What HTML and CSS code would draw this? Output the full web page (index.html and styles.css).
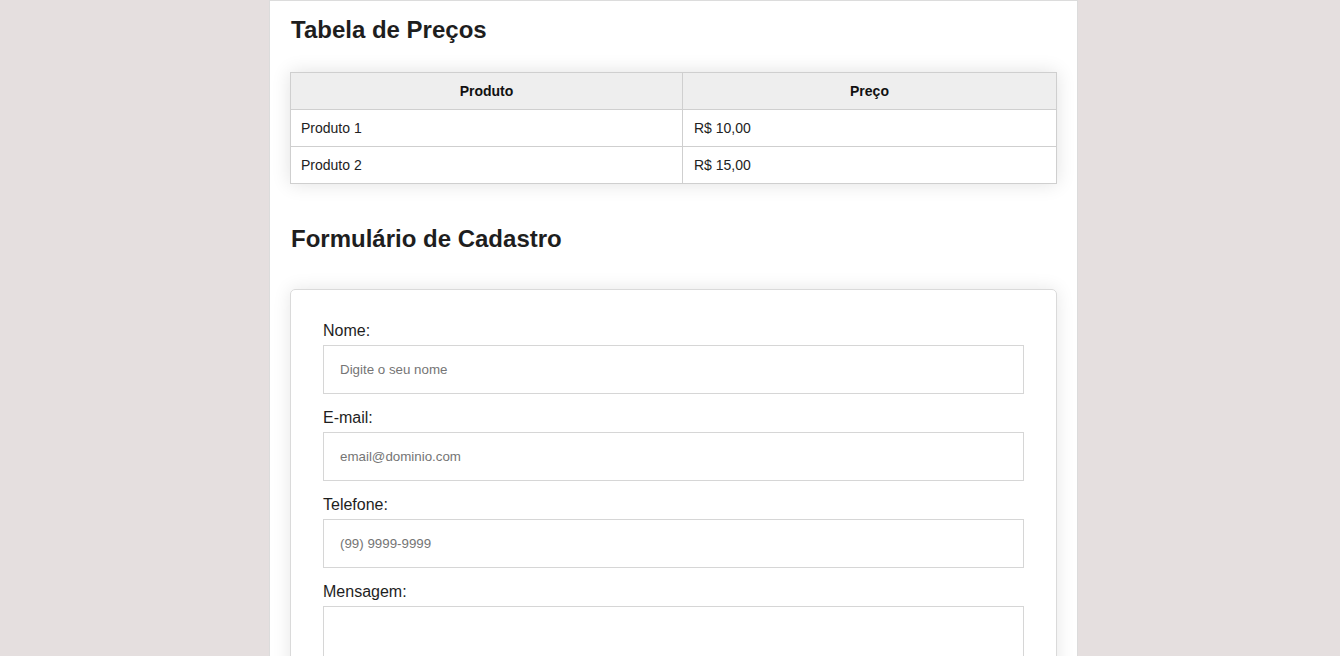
FILE: index.html
```html
<!DOCTYPE html>
<html lang="pt-BR">
<head>
<meta charset="utf-8">
<title>Tabela de Preços</title>
<link rel="stylesheet" href="styles.css">
</head>
<body>
<main class="container">
  <h2 class="title">Tabela de Preços</h2>
  <table class="price-table">
    <thead>
      <tr><th class="col-product">Produto</th><th>Preço</th></tr>
    </thead>
    <tbody>
      <tr><td>Produto 1</td><td>R$ 10,00</td></tr>
      <tr><td>Produto 2</td><td>R$ 15,00</td></tr>
    </tbody>
  </table>
  <h2 class="title title-form">Formulário de Cadastro</h2>
  <form class="card">
    <label class="label" for="nome">Nome:</label>
    <input class="field" id="nome" type="text" placeholder="Digite o seu nome">
    <label class="label" for="email">E-mail:</label>
    <input class="field" id="email" type="email" placeholder="email@dominio.com">
    <label class="label" for="tel">Telefone:</label>
    <input class="field" id="tel" type="tel" placeholder="(99) 9999-9999">
    <label class="label" for="msg">Mensagem:</label>
    <textarea class="field area" id="msg"></textarea>
  </form>
</main>
</body>
</html>
```
FILE: styles.css
```css
html, body {
  margin: 0;
  height: 100%;
}
body {
  padding-left: 7px;
  background: #e5dfdf;
  font-family: "Liberation Sans", Arial, sans-serif;
  color: #222;
  overflow: hidden;
}
.container {
  width: 767px;
  margin: 0 auto;
  padding: 15px 20px 40px;
  background: #fff;
  border: 1px solid #dcdcdc;
  min-height: 100%;
}
.title {
  margin: 0 0 28px 1px;
  font-size: 24px;
  line-height: 28px;
  font-weight: bold;
  color: #1e1e1e;
}
.title-form {
  margin: 41px 0 36px 1px;
}
.price-table {
  width: 100%;
  border-collapse: collapse;
  box-shadow: 0 0 18px rgba(0, 0, 0, 0.12);
  font-size: 14px;
  line-height: 16px;
}
.price-table th,
.price-table td {
  border: 1px solid #cfcfcf;
  padding: 10px;
  text-align: left;
}
.price-table td:last-child {
  padding-left: 11px;
}
.price-table th {
  background: #eee;
  text-align: center;
  font-weight: bold;
  color: #111;
}
.col-product {
  width: 371px;
}
.card {
  display: flex;
  flex-direction: column;
  padding: 32px 32px 40px;
  border: 1px solid #dadada;
  border-radius: 5px;
  box-shadow: 0 0 18px rgba(0, 0, 0, 0.1);
}
.label {
  font-size: 16px;
  line-height: 18px;
  margin-bottom: 5px;
  color: #1e1e1e;
}
.field {
  box-sizing: border-box;
  height: 49px;
  margin: 0 0 14px;
  padding: 0 16px;
  border: 1px solid #d6d6d6;
  border-radius: 0;
  font-family: "Liberation Sans", Arial, sans-serif;
  font-size: 13.333px;
  color: #222;
  outline: none;
}
.field + .label {
  margin-top: 1px;
}
.field::placeholder {
  color: #757575;
}
.area {
  height: 100px;
  resize: vertical;
}
```
